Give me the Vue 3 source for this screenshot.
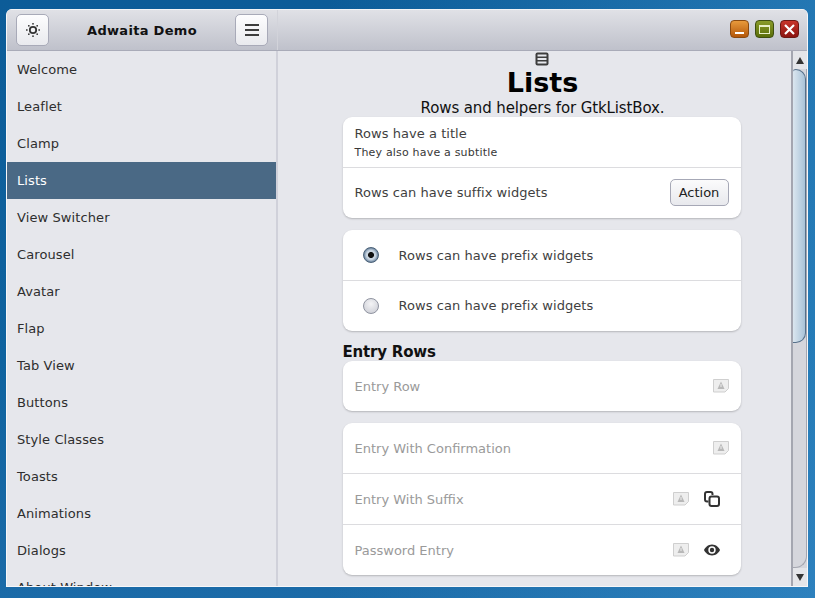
<script setup>
const items = ['Welcome','Leaflet','Clamp','Lists','View Switcher','Carousel','Avatar','Flap','Tab View','Buttons','Style Classes','Toasts','Animations','Dialogs','About Window']
</script>

<template>
  <div class="desktop">
    <div class="window">
      <header class="titlebar">
        <div class="head-left">
          <button class="hbtn">
            <svg width="16" height="16" viewBox="0 0 16 16" fill="none">
              <circle cx="8" cy="8" r="3.2" stroke="#333" stroke-width="1.8"/>
              <g fill="#444">
                <rect x="7.2" y="1" width="1.6" height="1.6"/><rect x="7.2" y="13.400" width="1.6" height="1.6"/>
                <rect x="1" y="7.2" width="1.6" height="1.6"/><rect x="13.400" y="7.2" width="1.6" height="1.6"/>
                <rect x="3" y="3" width="1.6" height="1.6"/><rect x="11.400" y="3" width="1.6" height="1.6"/>
                <rect x="3" y="11.400" width="1.6" height="1.6"/><rect x="11.400" y="11.400" width="1.6" height="1.6"/>
              </g>
            </svg>
          </button>
          <div class="app-title">Adwaita Demo</div>
          <button class="hbtn">
            <svg width="16" height="16" viewBox="0 0 16 16" fill="#3d3d3d">
              <rect x="1" y="2" width="14" height="2"/><rect x="1" y="7" width="14" height="2"/><rect x="1" y="12" width="14" height="2"/>
            </svg>
          </button>
        </div>
        <div class="head-right">
          <span class="wb orange"><i class="min"></i></span>
          <span class="wb green"><i class="max"></i></span>
          <span class="wb red">
            <svg width="11" height="11" viewBox="0 0 11 11" stroke="#fff" stroke-width="2.2"><path d="M1 1l9 9M10 1l-9 9"/></svg>
          </span>
        </div>
      </header>
      <div class="body">
        <nav class="sidebar">
          <div v-for="it in items" :key="it" class="nav" :class="{ active: it === 'Lists' }">{{ it }}</div>
        </nav>
        <main class="content">
          <div class="scroll">
            <svg class="page-icon" width="14" height="14" viewBox="0 0 14 14">
              <rect x="0.5" y="0.5" width="13" height="13" rx="2" fill="#3d3d3d"/>
              <rect x="2.5" y="2.5" width="9" height="2" fill="#e6e7ec"/>
              <rect x="2.5" y="6" width="9" height="2" fill="#e6e7ec"/>
              <rect x="2.5" y="9.5" width="9" height="2" fill="#e6e7ec"/>
            </svg>
            <h1>Lists</h1>
            <p class="sub">Rows and helpers for GtkListBox.</p>
            <section class="card">
              <div class="row">
                <div class="titled">
                  <div class="t">Rows have a title</div>
                  <div class="st">They also have a subtitle</div>
                </div>
              </div>
              <div class="row">
                <div class="t grow lift">Rows can have suffix widgets</div>
                <button class="action">Action</button>
              </div>
            </section>
            <section class="card gap">
              <div class="row">
                <span class="radio on"></span>
                <div class="t">Rows can have prefix widgets</div>
              </div>
              <div class="row">
                <span class="radio lift"></span>
                <div class="t lift">Rows can have prefix widgets</div>
              </div>
            </section>
            <h2>Entry Rows</h2>
            <section class="card">
              <div class="row">
                <div class="ph grow">Entry Row</div>
                <svg class="warn" width="16" height="14" viewBox="0 0 16 14"><path d="M.5.5h15v9l-3.5 3.500H.5z" fill="#eee" stroke="#cfcfcf"/><path d="M8 2.500l3.500 7.500h-7z" fill="#b8b8b8"/><path d="M7.500 5h1v3h-1z" fill="#eee"/></svg>
              </div>
            </section>
            <section class="card gap">
              <div class="row">
                <div class="ph grow">Entry With Confirmation</div>
                <svg class="warn" width="16" height="14" viewBox="0 0 16 14"><path d="M.5.5h15v9l-3.5 3.500H.5z" fill="#eee" stroke="#cfcfcf"/><path d="M8 2.500l3.500 7.500h-7z" fill="#b8b8b8"/><path d="M7.500 5h1v3h-1z" fill="#eee"/></svg>
              </div>
              <div class="row">
                <div class="ph grow">Entry With Suffix</div>
                <svg class="warn w2" width="16" height="14" viewBox="0 0 16 14"><path d="M.5.5h15v9l-3.5 3.500H.5z" fill="#eee" stroke="#cfcfcf"/><path d="M8 2.500l3.500 7.500h-7z" fill="#b8b8b8"/><path d="M7.500 5h1v3h-1z" fill="#eee"/></svg>
                <svg class="sfx" width="16" height="16" viewBox="0 0 16 16" fill="none" stroke="#333" stroke-width="2">
                  <path d="M4.500 10.500H3a2 2 0 0 1-2-2V3a2 2 0 0 1 2-2h3.500a2 2 0 0 1 2 2v1"/>
                  <rect x="5.500" y="5.500" width="9.500" height="9.500" rx="2"/>
                </svg>
              </div>
              <div class="row">
                <div class="ph grow">Password Entry</div>
                <svg class="warn w2" width="16" height="14" viewBox="0 0 16 14"><path d="M.5.5h15v9l-3.5 3.500H.5z" fill="#eee" stroke="#cfcfcf"/><path d="M8 2.500l3.500 7.500h-7z" fill="#b8b8b8"/><path d="M7.500 5h1v3h-1z" fill="#eee"/></svg>
                <svg class="sfx" width="16" height="16" viewBox="0 0 16 16">
                  <path d="M8 2.500C4 2.500 1.200 5.500 0 8c1.200 2.500 4 5.500 8 5.500s6.800-3 8-5.500c-1.200-2.500-4-5.500-8-5.500z" fill="#333"/>
                  <circle cx="8" cy="8" r="3.700" fill="#fff"/><circle cx="8" cy="8" r="2.200" fill="#333"/>
                </svg>
              </div>
            </section>
          </div>
          <div class="scrollbar">
            <div class="arrow"><span class="up"></span></div>
            <div class="track"><div class="thumb"></div></div>
            <div class="arrow"><span class="down"></span></div>
          </div>
        </main>
      </div>
    </div>
  </div>
</template>

<style>
html, body { margin: 0; height: 100%; overflow: hidden; }
</style>

<style scoped>
.desktop {
  width: 815px; height: 598px; box-sizing: border-box;
  padding: 9px 7px 11px 6px;
  background:
    linear-gradient(90deg, rgba(255,255,255,0) 40%, rgba(80,170,230,.35) 100%),
    linear-gradient(180deg, #0c5c98 0%, #0f639f 60%, #1b6ba8 100%);
  font-family: "DejaVu Sans", sans-serif;
}
.window {
  height: 578px; box-sizing: border-box; display: flex; flex-direction: column;
  background: #e6e7ec; border-radius: 6px 6px 0 0; overflow: hidden;
  border: 1px solid #f7f7f9; border-top: 0;
}
.titlebar {
  height: 42px; flex: none; box-sizing: border-box; display: flex;
  background: linear-gradient(180deg, #e0e1e6 0%, #bfc1cb 100%);
  border-bottom: 1px solid #a9abb8; border-top: 1px solid #f2f3f5;
}
.head-left {
  width: 271px; flex: none; box-sizing: border-box; display: flex; align-items: center;
  padding: 0 9px 0 9px; justify-content: space-between;
  border-right: 1px solid #d2d3da;
}
.hbtn {
  width: 33px; height: 32px; padding: 0; display: grid; place-items: center;
  border: 1px solid #a8aab8; border-radius: 5px;
  background: linear-gradient(180deg, #fdfdfe, #e9eaee);
}
.app-title { font-weight: 700; font-size: 13px; letter-spacing: 0.3px; color: #111; }
.head-right { flex: 1; display: flex; justify-content: flex-end; align-items: center; gap: 6px; padding: 0 8px 2px 0; }
.wb {
  width: 19px; height: 18px; border-radius: 4px; display: grid; place-items: center;
  border: 1px solid #555; box-sizing: border-box;
}
.orange { background: linear-gradient(180deg, #e89a3c, #b4570a); border-color: #8a4a10; }
.green { background: linear-gradient(180deg, #8a9c2a, #5a6e08); border-color: #3f4f10; }
.red { background: linear-gradient(180deg, #c8342a, #8c1410); border-color: #6d1712; }
.min { width: 9px; height: 2px; background: #fff; margin-top: 7px; }
.max { width: 9px; height: 6px; border: 1px solid #e8f0c8; border-top-width: 2px; }
.body { flex: 1; display: flex; min-height: 0; }
.sidebar {
  width: 269px; box-sizing: content-box; flex: none; overflow: hidden;
  border-right: 2px solid #d0d1da; background: #e6e7ec;
}
.nav {
  height: 37px; line-height: 37px; padding-left: 10px; font-size: 13px; color: #2e2e2e;
  letter-spacing: 0.1px;
}
.nav.active { background: #4a6985; color: #fff; }
.content { flex: 1; display: flex; min-width: 0; position: relative; }
.scroll {
  flex: 1; min-width: 0; overflow: hidden; display: flex; flex-direction: column; align-items: center;
  padding: 1px 2px 0 0;
}
.page-icon { flex: none; }
h1 { margin: 1px 0 0 2px; font-size: 27px; line-height: 32px; font-weight: 700; color: #000; }
.sub { margin: 0 0 0 2px; font-size: 15px; line-height: 18px; color: #111; letter-spacing: -0.12px; }
.card {
  width: 398px; flex: none; background: #fff; border-radius: 9px;
  box-shadow: 0 1px 2px rgba(0,0,0,.22);
}
.card.gap { margin-top: 12px; }
.row { height: 50px; display: flex; align-items: center; padding: 0 12px; }
.row + .row { border-top: 1px solid #dcdcdf; }
.titled { margin-top: 2px; }
.lift { margin-top: -2px; }
.t { font-size: 13px; color: #3f3f3f; letter-spacing: 0.05px; line-height: 17px; }
.st { font-size: 11px; color: #383838; letter-spacing: 0.19px; line-height: 16px; margin-top: 3px; }
.grow { flex: 1; }
.action {
  width: 59px; height: 27px; padding: 0; border: 1px solid #a6a8b6; border-radius: 5px;
  background: linear-gradient(180deg, #fbfbfc, #e8e9ed); margin-top: -1px;
  font: 13px "DejaVu Sans", sans-serif; color: #222;
}
.radio {
  width: 16px; height: 16px; border-radius: 50%; box-sizing: border-box; margin: 0 20px 0 8px; flex: none;
  border: 1px solid #8f93a0; background: radial-gradient(circle at 50% 35%, #f4f4f6, #c8cad2);
}
.radio.on {
  border-color: #4a6077;
  background: radial-gradient(circle, #111 0 2.6px, #c8d4e0 3.4px 4.6px, #6f88a2 7px);
}
h2 { width: 398px; margin: 12px 0 0; font-size: 15px; line-height: 18px; font-weight: 700; color: #111; letter-spacing: -0.2px; }
.ph { font-size: 13px; color: #9a9a9a; }
.warn { flex: none; }
.warn.w2 { margin-right: 15px; }
.sfx { flex: none; margin-right: 9px; }
.scrollbar {
  position: absolute; top: 0; right: 0; bottom: 0;
  width: 16px; display: flex; flex-direction: column; background: #d5d6dc;
  border-left: 2px solid #a4a6b0; box-sizing: border-box;
}
.arrow { height: 18px; flex: none; display: grid; place-items: center; background: #e4e5e9; }
.up, .down { width: 0; height: 0; border-left: 4px solid transparent; border-right: 4px solid transparent; }
.up { border-bottom: 7px solid #333; }
.down { border-top: 7px solid #333; }
.track { flex: 1; display: flex; flex-direction: column; border-radius: 0 0 12px 0; overflow: hidden; border-bottom: 1px solid #a4a6b0; border-right: 1px solid #a4a6b0; }
.thumb {
  height: 274px; box-sizing: border-box; border-radius: 4px 14px 14px 0 / 4px 14px 14px 0;
  border: 1px solid #56708a; border-left: 0;
  background: linear-gradient(90deg, #dbe6ef, #a9c3d8);
}
</style>
